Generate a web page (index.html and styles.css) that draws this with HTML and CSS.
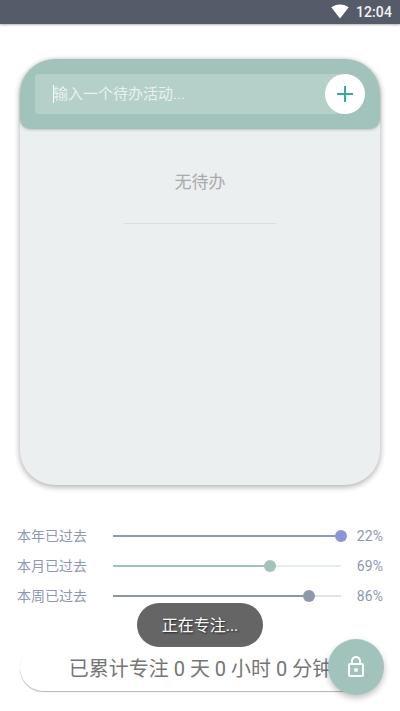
FILE: index.html
```html
<!DOCTYPE html>
<html lang="zh-CN">
<head>
<meta charset="utf-8">
<title>待办</title>
<link rel="stylesheet" href="styles.css">
</head>
<body>
<header class="status">
  <svg class="wifi" width="18" height="15" viewBox="0 0 18 15"><path d="M9 14.5 0.3 3.3C2.6 1.4 5.600 0.4 9 0.4s6.400 1 8.700 2.900z" fill="#fff"/></svg>
  <span class="clock">12:04</span>
</header>
<main>
  <section class="card">
    <div class="entry">
      <div class="field"><span class="caret"></span><span class="hint">输入一个待办活动...</span></div>
      <button class="add" aria-label="添加"><svg width="16" height="16" viewBox="0 0 16 16"><path d="M8 0v16M0 8h16" stroke="#36ab98" stroke-width="2"/></svg></button>
    </div>
    <p class="empty">无待办</p>
    <div class="rule"></div>
  </section>
  <section class="progress">
    <div class="row year"><span class="label">本年已过去</span><div class="track"><div class="fill" style="width:100%"></div></div><span class="value">22%</span></div>
    <div class="row month"><span class="label">本月已过去</span><div class="track"><div class="fill" style="width:69%"></div></div><span class="value">69%</span></div>
    <div class="row week"><span class="label">本周已过去</span><div class="track"><div class="fill" style="width:86%"></div></div><span class="value">86%</span></div>
  </section>
  <section class="total">已累计专注 0 天 0 小时 0 分钟</section>
</main>
<div class="toast">正在专注...</div>
<button class="fab" aria-label="锁定"><svg width="24" height="24" viewBox="0 0 24 24"><path fill="#fff" d="M12 17c1.1 0 2-.9 2-2s-.9-2-2-2-2 .9-2 2 .9 2 2 2zm6-9h-1V6c0-2.760-2.240-5-5-5S7 3.240 7 6v2H6c-1.100 0-2 .9-2 2v10c0 1.100.9 2 2 2h12c1.100 0 2-.9 2-2V10c0-1.100-.9-2-2-2zM8.900 6c0-1.710 1.390-3.100 3.100-3.100s3.100 1.390 3.100 3.100v2H8.900V6zM18 20H6V10h12v10z"/></svg></button>
</body>
</html>
```
FILE: styles.css
```css
* { box-sizing: border-box; }
body {
  margin: 0;
  position: relative;
  height: 711px;
  overflow: hidden;
  background: #fff;
  font-family: Roboto, "Noto Sans CJK SC", sans-serif;
}
button { border: 0; padding: 0; display: flex; align-items: center; justify-content: center; border-radius: 50%; }
.status {
  height: 24px;
  padding-right: 8px;
  display: flex;
  align-items: center;
  justify-content: flex-end;
  gap: 7px;
  background: #555b69;
  box-shadow: 0 1px 2px rgba(0, 0, 0, .3);
  color: #f4f5f6;
}
.wifi { margin-top: -1px; }
.clock { font-size: 14px; font-weight: 500; line-height: 24px; letter-spacing: .1px; }
main { padding: 35px 20px 0; }
.card {
  height: 426px;
  border-radius: 35px;
  background: #ebeff0;
  box-shadow: 0 2px 6px rgba(0, 0, 0, .24), 0 1px 6px rgba(0, 0, 0, .12);
}
.entry {
  height: 70px;
  padding: 15px;
  display: flex;
  border-radius: 35px 35px 10px 10px;
  background: #a1c3bb;
  box-shadow: 0 1px 3px rgba(0, 0, 0, .2);
}
.field {
  flex: 1;
  height: 40px;
  margin-right: -20px;
  padding-left: 18px;
  display: flex;
  align-items: center;
  border-radius: 4px 0 0 4px;
  background: #b4d0c9;
}
.caret { width: 1px; height: 18px; margin-right: -1px; background: #fff; }
.hint { font-size: 15px; line-height: 40px; color: #e9f1ef; }
.add { width: 40px; height: 40px; background: #fff; position: relative; }
.empty { margin: 40px 0 0; font-size: 17px; line-height: 26px; text-align: center; color: #aaa; }
.rule { width: 152px; height: 1px; margin: 28px auto 0; background: #d6e2e1; }
.progress { margin: 36px -3px 0; }
.row { height: 30px; display: flex; align-items: center; font-size: 14px; color: #8e97b3; }
.label { width: 96px; padding-bottom: 2px; }
.track { width: 228px; height: 2px; }
.fill { height: 2px; position: relative; }
.fill::after { content: ""; position: absolute; right: -6px; top: -5px; width: 12px; height: 12px; border-radius: 50%; }
.year .fill { background: #8c98bd; }
.year .fill::after { background: #8b96d9; }
.month .track { background: #e4eeeb; }
.month .fill, .month .fill::after { background: #a1c3bb; }
.week .track { background: #e2e3ea; }
.week .fill { background: #8e95a5; }
.week .fill::after { background: #8e97ad; }
.value { margin-left: 16px; letter-spacing: .1px; }
.total {
  height: 46px;
  margin-top: 34px;
  padding-left: 1px;
  border-radius: 23px;
  background: #fff;
  box-shadow: 0 1px 1px rgba(0, 0, 0, .3);
  font-size: 20px;
  line-height: 48px;
  text-align: center;
  white-space: nowrap;
  color: #757575;
}
.toast {
  position: absolute;
  left: 137px;
  top: 603px;
  width: 126px;
  height: 44px;
  border-radius: 22px;
  background: #656565;
  color: #fff;
  font-size: 16px;
  line-height: 46px;
  text-align: center;
  text-shadow: 1px 1px 2px rgba(0, 0, 0, .7);
}
.fab {
  position: absolute;
  left: 328px;
  top: 639px;
  width: 56px;
  height: 56px;
  background: #a1c3bb;
  box-shadow: 0 3px 6px rgba(0, 0, 0, .25);
}
```
